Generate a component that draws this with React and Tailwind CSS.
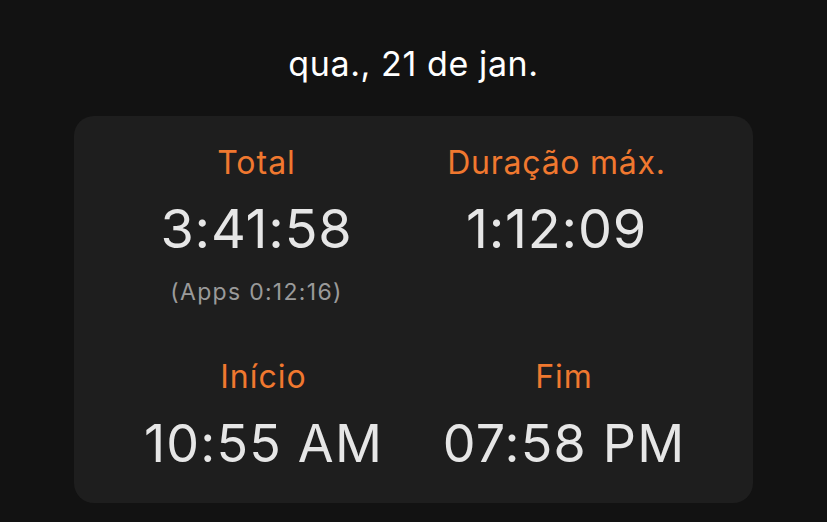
export default function App() {
  const font = { fontFamily: 'Inter, "Noto Sans", sans-serif' };
  return (
    <div className="w-[827px] h-[522px] bg-[#121212] overflow-hidden flex flex-col items-center" style={font}>
      <div className="mt-[47px] text-[34px] leading-none text-white tracking-[0.6px] whitespace-nowrap">qua., 21 de jan.</div>
      <div className="mt-[35px] w-[679px] rounded-[20px] bg-[#1e1e1e] pt-[31px] pb-[33px] flex flex-col">
        <div className="flex justify-center gap-[97px]">
          <div className="w-[189px] flex flex-col items-center">
            <div className="text-[32px] leading-none text-[#f0782f] tracking-[1px] whitespace-nowrap">Total</div>
            <div className="mt-[23px] text-[54px] leading-none text-[#e6e6e6] tracking-[0.8px] whitespace-nowrap">3:41:58</div>
            <div className="mt-[25px] text-[23px] leading-none text-[#9a9a9a] tracking-[1.3px] whitespace-nowrap">(Apps 0:12:16)</div>
          </div>
          <div className="w-[217px] flex flex-col items-center">
            <div className="text-[32px] leading-none text-[#f0782f] tracking-[0.75px] whitespace-nowrap">Duração máx.</div>
            <div className="mt-[23px] text-[54px] leading-none text-[#e6e6e6] tracking-[0.8px] whitespace-nowrap">1:12:09</div>
          </div>
        </div>
        <div className="mt-[57px] flex justify-center gap-[64px]">
          <div className="w-[237px] flex flex-col items-center">
            <div className="text-[32px] leading-none text-[#f0782f] tracking-[1px] whitespace-nowrap">Início</div>
            <div className="mt-[25px] text-[52px] leading-none text-[#e6e6e6] tracking-[1.2px] whitespace-nowrap">10:55 AM</div>
          </div>
          <div className="w-[236px] flex flex-col items-center">
            <div className="text-[32px] leading-none text-[#f0782f] tracking-[1px] whitespace-nowrap">Fim</div>
            <div className="mt-[25px] text-[52px] leading-none text-[#e6e6e6] tracking-[1.2px] whitespace-nowrap">07:58 PM</div>
          </div>
        </div>
      </div>
    </div>
  );
}
